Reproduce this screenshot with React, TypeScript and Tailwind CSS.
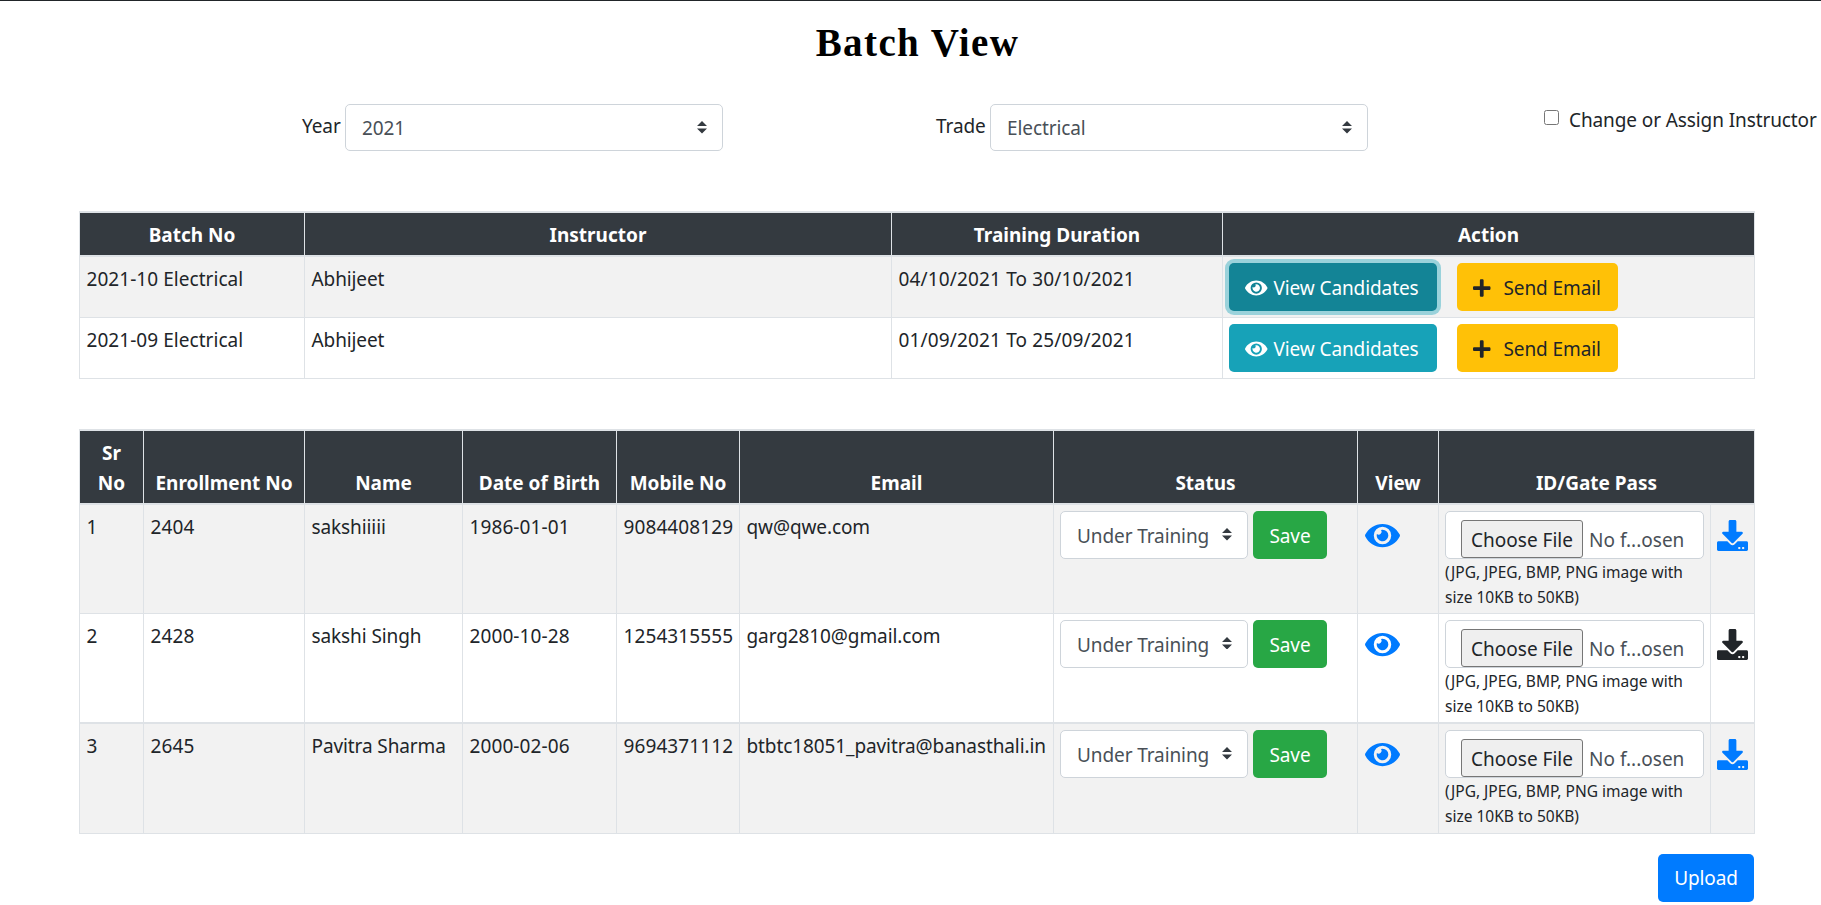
import { FaDownload, FaEye, FaPlus } from 'react-icons/fa';

const batches = [
  { no: '2021-10 Electrical', instructor: 'Abhijeet', duration: '04/10/2021 To 30/10/2021', focused: true },
  { no: '2021-09 Electrical', instructor: 'Abhijeet', duration: '01/09/2021 To 25/09/2021', focused: false },
];

const candidates = [
  { sr: 1, enrollment: '2404', name: 'sakshiiiii', dob: '1986-01-01', mobile: '9084408129', email: 'qw@qwe.com', uploaded: true },
  { sr: 2, enrollment: '2428', name: 'sakshi Singh', dob: '2000-10-28', mobile: '1254315555', email: 'garg2810@gmail.com', uploaded: false },
  { sr: 3, enrollment: '2645', name: 'Pavitra Sharma', dob: '2000-02-06', mobile: '9694371112', email: 'btbtc18051_pavitra@banasthali.in', uploaded: true },
];

function SelectBox({ value, options, className, selectClass = '' }: { value: string; options: string[]; className: string; selectClass?: string }) {
  return (
    <div className={`relative ${className}`}>
      <select
        defaultValue={value}
        className={`h-full w-full appearance-none rounded-[5px] border border-[#ced4da] bg-white pl-[16px] pr-[30px] text-[#495057] outline-none ${selectClass}`}
      >
        {options.map((o) => (
          <option key={o}>{o}</option>
        ))}
      </select>
      <svg viewBox="0 0 4 5" className="pointer-events-none absolute right-[16px] top-[17px] h-[12.5px] w-[10px]">
        <path fill="#343a40" d="M2 0L0 2h4zm0 5L0 3h4z" />
      </svg>
    </div>
  );
}

const thClass = 'border border-[#dee2e6] bg-[#343a40] px-[6px] pb-[5px] pt-[7px] text-center align-bottom font-bold tracking-normal text-white';
const tdClass = 'border border-[#dee2e6] px-[6.5px] py-[7px] align-top';

export default function App() {
  return (
    <div className="min-h-[905px] border-t border-[#212529] bg-white font-['Noto_Sans',sans-serif] text-[19px] leading-[30px] tracking-[-0.1px] text-[#212529]">
      <h1 className="pl-[14px] pt-[19px] text-center font-['Liberation_Serif',serif] text-[39px] font-bold leading-[46px] tracking-[1.4px] text-black">
        Batch View
      </h1>

      <div className="ml-[302px] mt-[38px] flex items-start">
        <label className="w-[43px] pt-[7px]">Year</label>
        <SelectBox value="2021" options={['2021', '2020', '2019']} className="h-[47px] w-[378px]" />
        <label className="ml-[213px] w-[54px] pt-[7px]">Trade</label>
        <SelectBox value="Electrical" options={['Electrical', 'Mechanical']} className="h-[47px] w-[378px]" />
        <input type="checkbox" className="ml-[176px] mt-[6px] h-[15px] w-[15px]" />
        <span className="ml-[10px] mt-[1px] whitespace-nowrap">Change or Assign Instructor</span>
      </div>

      <table className="ml-[79px] mt-[60px] w-[1675px] table-fixed border-collapse border-t-2 border-[#dee2e6]">
        <colgroup>
          <col className="w-[225px]" />
          <col className="w-[587px]" />
          <col className="w-[331px]" />
          <col className="w-[532px]" />
        </colgroup>
        <thead>
          <tr className="border-b-2 border-[#dee2e6]">
            <th className={thClass}>Batch No</th>
            <th className={thClass}>Instructor</th>
            <th className={thClass}>Training Duration</th>
            <th className={thClass}>Action</th>
          </tr>
        </thead>
        <tbody>
          {batches.map((b, i) => (
            <tr key={b.no} className={i % 2 === 0 ? 'bg-[#f2f2f2]' : 'bg-white'}>
              <td className={`${tdClass} tracking-[0.05px]`}>{b.no}</td>
              <td className={tdClass}>{b.instructor}</td>
              <td className={`${tdClass} tracking-[0.15px]`}>{b.duration}</td>
              <td className="border border-[#dee2e6] px-[6px] py-[6px] align-top">
                <div className="flex gap-[20px]">
                  <button
                    className={`flex h-[48px] w-[208px] items-center gap-[6px] rounded-[5px] pl-[16px] pt-[1px] text-white ${
                      b.focused ? 'bg-[#138496] ring-[4px] ring-[#17a2b8]/40' : 'bg-[#17a2b8]'
                    }`}
                  >
                    <FaEye className="h-[20px] w-[22.5px]" />
                    View Candidates
                  </button>
                  <button className="flex h-[48px] w-[161px] items-center gap-[13px] rounded-[5px] bg-[#ffc107] pl-[16px] pt-[1px]">
                    <FaPlus className="h-[20px] w-[17.5px]" />
                    Send Email
                  </button>
                </div>
              </td>
            </tr>
          ))}
        </tbody>
      </table>

      <table className="ml-[79px] mt-[50px] w-[1675px] table-fixed border-collapse border-t-2 border-[#dee2e6]">
        <colgroup>
          <col className="w-[64px]" />
          <col className="w-[161px]" />
          <col className="w-[158px]" />
          <col className="w-[154px]" />
          <col className="w-[123px]" />
          <col className="w-[314px]" />
          <col className="w-[304px]" />
          <col className="w-[81px]" />
          <col className="w-[272px]" />
          <col className="w-[44px]" />
        </colgroup>
        <thead>
          <tr className="border-b-2 border-[#dee2e6]">
            <th className={thClass}>Sr No</th>
            <th className={`${thClass} whitespace-nowrap`}>Enrollment No</th>
            <th className={thClass}>Name</th>
            <th className={`${thClass} whitespace-nowrap`}>Date of Birth</th>
            <th className={`${thClass} whitespace-nowrap`}>Mobile No</th>
            <th className={thClass}>Email</th>
            <th className={thClass}>Status</th>
            <th className={thClass}>View</th>
            <th className={thClass} colSpan={2}>ID/Gate Pass</th>
          </tr>
        </thead>
        <tbody>
          {candidates.map((c, i) => (
            <tr key={c.sr} className={`${i === 0 ? 'h-[109px]' : 'h-[110px]'} ${i % 2 === 0 ? 'bg-[#f2f2f2]' : 'bg-white'} ${i === 1 ? 'border-b-2 border-[#dee2e6]' : ''}`}>
              <td className={tdClass}>{c.sr}</td>
              <td className={`${tdClass} tracking-[0.1px]`}>{c.enrollment}</td>
              <td className={`${tdClass} whitespace-nowrap`}>{c.name}</td>
              <td className={`${tdClass} tracking-[0.1px]`}>{c.dob}</td>
              <td className={`${tdClass} tracking-[0.1px]`}>{c.mobile}</td>
              <td className={`${tdClass} whitespace-nowrap`}>{c.email}</td>
              <td className="border border-[#dee2e6] pl-[6px] pr-0 pt-[6px] align-top">
                <div className="flex gap-[5px]">
                  <SelectBox value="Under Training" options={['Under Training', 'Completed']} className="h-[48px] w-[188px]" selectClass="pt-[2px]" />
                  <button className="h-[48px] w-[74px] rounded-[5px] bg-[#28a745] pt-[2px] text-white">Save</button>
                </div>
              </td>
              <td className={tdClass}>
                <FaEye className="mt-[8px] h-[31px] w-[35px] text-[#007bff]" />
              </td>
              <td className="border border-[#dee2e6] pb-0 pl-[6px] pr-[6px] pt-[6px] align-top">
                <div className="flex h-[48px] w-[259px] items-end rounded-[5px] border border-[#ced4da] bg-white pl-[15px]">
                  <button className="h-[38px] w-[122px] rounded-[3px] border border-[#767676] bg-[#efefef] pt-[2px] tracking-normal text-[#212529]">
                    Choose File
                  </button>
                  <span className="mb-[3px] ml-[6px] tracking-normal text-[#495057]">No f...osen</span>
                </div>
                <p className="mt-[1px] text-[15.5px] leading-[25px] tracking-normal">(JPG, JPEG, BMP, PNG image with size 10KB to 50KB)</p>
              </td>
              <td className={`${tdClass} pl-[6px] pr-0`}>
                <FaDownload className={`mt-[8px] h-[31px] w-[31px] ${c.uploaded ? 'text-[#007bff]' : 'text-[#212529]'}`} />
              </td>
            </tr>
          ))}
        </tbody>
      </table>

      <div className="ml-[79px] mt-[20px] flex w-[1675px] justify-end">
        <button className="h-[48px] w-[96px] rounded-[5px] bg-[#007bff] text-white">Upload</button>
      </div>
    </div>
  );
}
